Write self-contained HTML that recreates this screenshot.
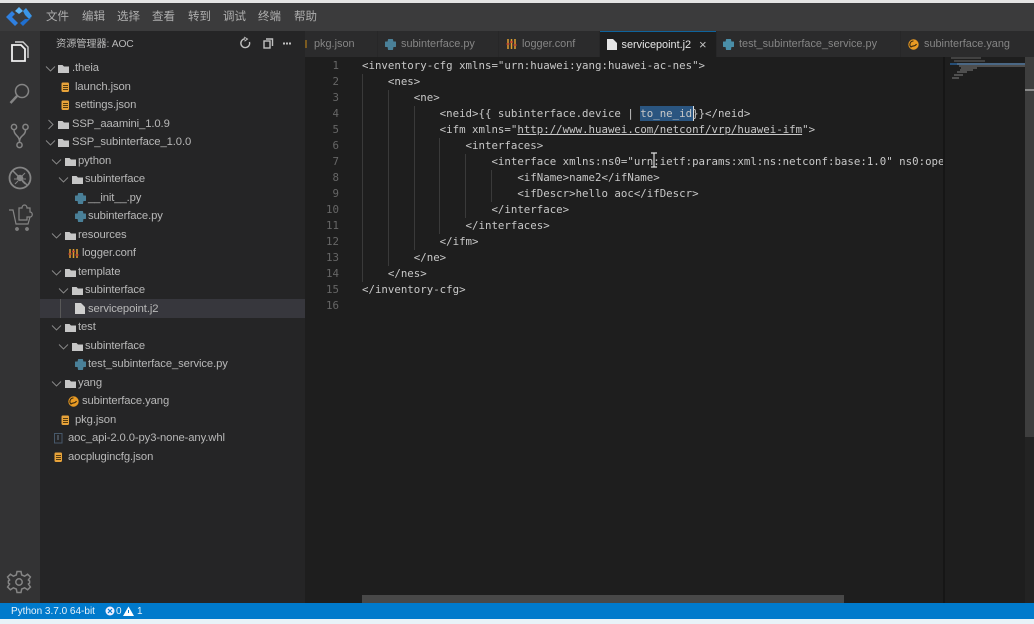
<!DOCTYPE html>
<html><head><meta charset="utf-8"><style>
*{box-sizing:border-box}
html,body{margin:0;padding:0;width:1034px;height:624px;overflow:hidden;background:#1e1e1e}
body{position:relative;font-family:"Liberation Sans","Noto Sans CJK SC",sans-serif;filter:blur(.35px)}
.a{position:absolute}
.t{position:absolute;white-space:nowrap}
#menu span{position:absolute;top:9px;font-size:11.5px;line-height:16px;color:#aeaeae}
.row{position:absolute;left:0;width:265px;height:18.5px;line-height:18.5px;font-size:11.25px;color:#b8b8b8;white-space:nowrap;letter-spacing:-.1px}
.row svg{position:absolute}
.row svg[stroke="#aaa"]{stroke:#8c8c8c;stroke-width:.9}
.row b{position:absolute;font-weight:normal;top:0}
.tab{position:absolute;top:31px;height:26px;background:#2b2b2c;font-size:10.9px;line-height:27px;color:#858585;white-space:nowrap}
.tab b{position:absolute;font-weight:normal;top:0}
.tab svg{position:absolute}
.ln{position:absolute;left:305px;width:34px;text-align:right;height:16px;font:10.75px/16px "DejaVu Sans Mono",monospace;color:#666}
.c{position:absolute;left:362px;height:16px;font:10.75px/16px "DejaVu Sans Mono",monospace;color:#c8c8c8;white-space:pre}
.g{position:absolute;width:1px;background:#3a3a3a}
</style></head><body>
<div class="a" style="left:0;top:0;width:1034px;height:3px;background:#e4e4e4"></div>
<div class="a" style="left:0;top:3px;width:1034px;height:28px;background:#3b3b3c"></div>
<svg class="a" style="left:5px;top:7px" width="28" height="20" viewBox="0 0 28 20"><path d="M1 10L7 4L10 7L7 10L10 13L13 16L10 19Z" fill="#2f80e0"/><path d="M10 4L14 0L18 4L14 7Z" fill="#5fb4f5"/><path d="M18 4L21 1L27 9L24 12L20 8Z" fill="#3a96e8"/><path d="M24 12L27 10L18 19L15 16L20 12Z" fill="#1f6fd0"/></svg>
<div id="menu"><span style="left:46px">文件</span><span style="left:82px">编辑</span><span style="left:117px">选择</span><span style="left:152px">查看</span><span style="left:188px">转到</span><span style="left:223px">调试</span><span style="left:258px">终端</span><span style="left:294px">帮助</span></div>

<div class="a" style="left:0;top:31px;width:40px;height:572px;background:#333334"></div>
<svg class="a" style="left:0;top:31px" width="40" height="210" viewBox="0 0 40 210" fill="none" stroke="#858585" stroke-width="1.5">
<g stroke="#f0f0f0" stroke-width="1.8"><path d="M12 14H21L25 18V30H12Z"/><path d="M15 11H23L28 16V27" stroke="#cfcfcf" stroke-width="1.4"/></g>
<circle cx="22" cy="60" r="6.5"/><path d="M17 65L10.5 72" stroke-width="2.4"/>
<circle cx="14" cy="96" r="2.6"/><circle cx="25.5" cy="96" r="2.6"/><circle cx="19.5" cy="114" r="2.6"/><path d="M14 99C14 105 19.5 104 19.5 111M25.5 99C25.5 105 19.5 104 19.5 111"/>
<circle cx="20" cy="147" r="10.5" stroke-width="1.8"/><path d="M12.5 139.5L27.5 154.5"/><circle cx="20" cy="147" r="3.2" fill="#858585" stroke="none"/><path d="M15 142L18 145M25 142L22 145M14 148H26M15 153L18 150M25 153L22 150" stroke-width="1"/>
<path d="M9 179H13L16 193H28L30 186" stroke-width="1.2"/><path d="M19 177H22C22 173 27 173 27 177H30V181C33 181 33 186 30 186H27V189H19Z" stroke-width="1.2"/><circle cx="17" cy="198" r="1.1"/><circle cx="27" cy="198" r="1.1"/>
</svg>
<svg class="a" style="left:6px;top:569px" width="26" height="26" viewBox="0 0 26 26" fill="none" stroke="#858585" stroke-width="1.5"><circle cx="13" cy="13" r="3.2"/><path d="M11 2.5H15L15.7 6L18.6 7.2L21.6 5.2L24.4 8L22.4 11L23.6 12V14L22.4 15L24.4 18L21.6 20.8L18.6 18.8L15.7 20L15 23.5H11L10.3 20L7.4 18.8L4.4 20.8L1.6 18L3.6 15L2.4 14V12L3.6 11L1.6 8L4.4 5.2L7.4 7.2L10.3 6Z"/></svg>

<div class="a" style="left:40px;top:31px;width:265px;height:572px;background:#252526"></div>
<div class="t" style="left:56px;top:37px;font-size:10.3px;line-height:16px;color:#b8b8b8;letter-spacing:-.2px">资源管理器: AOC</div>
<svg class="a" style="left:238px;top:36px" width="56" height="16" viewBox="0 0 56 16" fill="none" stroke="#c0c0c0" stroke-width="1.4"><path d="M7 2.8A4.4 4.4 0 1 0 11.5 6"/><path d="M6 1L9.5 3L6.5 5.2" stroke-width="1"/><rect x="26" y="5" width="6" height="7"/><path d="M28 3H34.5V10"/><path d="M45 7.5H53" stroke-dasharray="2 1" stroke-width="2"/></svg>

<div class="row" style="top:299px;left:40px;background:#37373d;height:19px"></div>
<div class="a" style="left:60px;top:299px;width:1px;height:19px;background:#585858"></div>

<div id="tree" class="a" style="left:40px;top:.6px;width:265px;height:600px">
<div class="row" style="top:58.5px"><svg style="left:5px;top:6px" width="11" height="8" fill="none" stroke="#aaa"><path d="M1 1.5L5.5 6L10 1.5"/></svg><svg style="left:18px;top:5px" width="12" height="10"><path d="M0 1H4.5L6 2.5H11V9H0Z" fill="#c6c6c6"/></svg><b style="left:32px">.theia</b></div>
<div class="row" style="top:77px"><svg style="left:21px;top:4px" width="9" height="11"><rect x=".5" y=".5" width="7.5" height="9.5" rx="1.2" fill="#e8a33a"/><path d="M2 3.5H7M2 5.5H7M2 7.5H7" stroke="#553c10"/></svg><b style="left:35px">launch.json</b></div>
<div class="row" style="top:95.5px"><svg style="left:21px;top:4px" width="9" height="11"><rect x=".5" y=".5" width="7.5" height="9.5" rx="1.2" fill="#e8a33a"/><path d="M2 3.5H7M2 5.5H7M2 7.5H7" stroke="#553c10"/></svg><b style="left:35px">settings.json</b></div>
<div class="row" style="top:114px"><svg style="left:7px;top:4px" width="8" height="11" fill="none" stroke="#aaa"><path d="M1.5 1L6 5.5L1.5 10"/></svg><svg style="left:18px;top:5px" width="12" height="10"><path d="M0 1H4.5L6 2.5H11V9H0Z" fill="#c6c6c6"/></svg><b style="left:32px">SSP_aaamini_1.0.9</b></div>
<div class="row" style="top:132.5px"><svg style="left:5px;top:6px" width="11" height="8" fill="none" stroke="#aaa"><path d="M1 1.5L5.5 6L10 1.5"/></svg><svg style="left:18px;top:5px" width="12" height="10"><path d="M0 1H4.5L6 2.5H11V9H0Z" fill="#c6c6c6"/></svg><b style="left:32px">SSP_subinterface_1.0.0</b></div>
<div class="row" style="top:151px"><svg style="left:11px;top:6px" width="11" height="8" fill="none" stroke="#aaa"><path d="M1 1.5L5.5 6L10 1.5"/></svg><svg style="left:25px;top:5px" width="12" height="10"><path d="M0 1H4.5L6 2.5H11V9H0Z" fill="#c6c6c6"/></svg><b style="left:38px">python</b></div>
<div class="row" style="top:169.5px"><svg style="left:18px;top:6px" width="11" height="8" fill="none" stroke="#aaa"><path d="M1 1.5L5.5 6L10 1.5"/></svg><svg style="left:32px;top:5px" width="12" height="10"><path d="M0 1H4.5L6 2.5H11V9H0Z" fill="#c6c6c6"/></svg><b style="left:45px">subinterface</b></div>
<div class="row" style="top:188px"><svg style="left:35px;top:4px" width="11" height="11"><path d="M3.5 .5H7.5L8 3H10.5V7.5H8L7.5 10.5H3.5L3 7.5H.5V3H3Z" fill="#4a8098" stroke="#4a8098" stroke-linejoin="round"/></svg><b style="left:48px">__init__.py</b></div>
<div class="row" style="top:206.5px"><svg style="left:35px;top:4px" width="11" height="11"><path d="M3.5 .5H7.5L8 3H10.5V7.5H8L7.5 10.5H3.5L3 7.5H.5V3H3Z" fill="#4a8098" stroke="#4a8098" stroke-linejoin="round"/></svg><b style="left:48px">subinterface.py</b></div>
<div class="row" style="top:225px"><svg style="left:11px;top:6px" width="11" height="8" fill="none" stroke="#aaa"><path d="M1 1.5L5.5 6L10 1.5"/></svg><svg style="left:25px;top:5px" width="12" height="10"><path d="M0 1H4.5L6 2.5H11V9H0Z" fill="#c6c6c6"/></svg><b style="left:38px">resources</b></div>
<div class="row" style="top:243.5px"><svg style="left:28px;top:4px" width="11" height="11" stroke="#e0a030" stroke-width="1.5"><path d="M2 1V10M5.5 1V10M9 1V10"/><path d="M.5 6H3.5M4 3.5H7M7.5 7H10.5" stroke="#c04030"/></svg><b style="left:42px">logger.conf</b></div>
<div class="row" style="top:262px"><svg style="left:11px;top:6px" width="11" height="8" fill="none" stroke="#aaa"><path d="M1 1.5L5.5 6L10 1.5"/></svg><svg style="left:25px;top:5px" width="12" height="10"><path d="M0 1H4.5L6 2.5H11V9H0Z" fill="#c6c6c6"/></svg><b style="left:38px">template</b></div>
<div class="row" style="top:280.5px"><svg style="left:18px;top:6px" width="11" height="8" fill="none" stroke="#aaa"><path d="M1 1.5L5.5 6L10 1.5"/></svg><svg style="left:32px;top:5px" width="12" height="10"><path d="M0 1H4.5L6 2.5H11V9H0Z" fill="#c6c6c6"/></svg><b style="left:45px">subinterface</b></div>
<div class="row" style="top:299px"><svg style="left:35px;top:3.5px" width="10" height="12"><path d="M0 0H6L10 4V11H0Z" fill="#cfcfcf"/></svg><b style="left:48px">servicepoint.j2</b></div>
<div class="row" style="top:317.5px"><svg style="left:11px;top:6px" width="11" height="8" fill="none" stroke="#aaa"><path d="M1 1.5L5.5 6L10 1.5"/></svg><svg style="left:25px;top:5px" width="12" height="10"><path d="M0 1H4.5L6 2.5H11V9H0Z" fill="#c6c6c6"/></svg><b style="left:38px">test</b></div>
<div class="row" style="top:336px"><svg style="left:18px;top:6px" width="11" height="8" fill="none" stroke="#aaa"><path d="M1 1.5L5.5 6L10 1.5"/></svg><svg style="left:32px;top:5px" width="12" height="10"><path d="M0 1H4.5L6 2.5H11V9H0Z" fill="#c6c6c6"/></svg><b style="left:45px">subinterface</b></div>
<div class="row" style="top:354.5px"><svg style="left:35px;top:4px" width="11" height="11"><path d="M3.5 .5H7.5L8 3H10.5V7.5H8L7.5 10.5H3.5L3 7.5H.5V3H3Z" fill="#4a8098" stroke="#4a8098" stroke-linejoin="round"/></svg><b style="left:48px">test_subinterface_service.py</b></div>
<div class="row" style="top:373px"><svg style="left:11px;top:6px" width="11" height="8" fill="none" stroke="#aaa"><path d="M1 1.5L5.5 6L10 1.5"/></svg><svg style="left:25px;top:5px" width="12" height="10"><path d="M0 1H4.5L6 2.5H11V9H0Z" fill="#c6c6c6"/></svg><b style="left:38px">yang</b></div>
<div class="row" style="top:391.5px"><svg style="left:28px;top:4px" width="11" height="11"><circle cx="5.5" cy="5.5" r="5.2" fill="#e89a24"/><path d="M5.5 2A3.5 3.5 0 0 0 3 8C5 6 7 8 8.5 5" fill="none" stroke="#3a2a10" stroke-width="1.1"/></svg><b style="left:42px">subinterface.yang</b></div>
<div class="row" style="top:410px"><svg style="left:21px;top:4px" width="9" height="11"><rect x=".5" y=".5" width="7.5" height="9.5" rx="1.2" fill="#e8a33a"/><path d="M2 3.5H7M2 5.5H7M2 7.5H7" stroke="#553c10"/></svg><b style="left:35px">pkg.json</b></div>
<div class="row" style="top:428.5px"><svg style="left:14px;top:4px" width="9" height="11" fill="none" stroke="#46586a"><path d="M.5 .5H8V10H.5Z"/><path d="M4 2V7" stroke="#6c7c8c"/></svg><b style="left:28px">aoc_api-2.0.0-py3-none-any.whl</b></div>
<div class="row" style="top:447px"><svg style="left:14px;top:4px" width="9" height="11"><rect x=".5" y=".5" width="7.5" height="9.5" rx="1.2" fill="#e8a33a"/><path d="M2 3.5H7M2 5.5H7M2 7.5H7" stroke="#553c10"/></svg><b style="left:28px">aocplugincfg.json</b></div>
</div>

<!-- tabs -->
<div class="a" style="left:305px;top:31px;width:729px;height:26px;background:#272728"></div>
<div class="tab" style="left:305px;width:72px"><div class="a" style="left:0;top:9px;width:2px;height:8px;background:#7a5a20"></div><b style="left:9px">pkg.json</b></div>
<div class="tab" style="left:378px;width:120px"><svg style="left:7px;top:8px" width="11" height="11"><path d="M3.5 .5H7.5L8 3H10.5V7.5H8L7.5 10.5H3.5L3 7.5H.5V3H3Z" fill="#4a8098" stroke="#4a8098" stroke-linejoin="round"/></svg><b style="left:23px">subinterface.py</b></div>
<div class="tab" style="left:499px;width:100px"><svg style="left:7px;top:8px" width="11" height="10" stroke="#e0a030" stroke-width="1.5"><path d="M2 0V10M5.5 0V10M9 0V10"/><path d="M.5 5H3.5M4 3H7M7.5 6H10.5" stroke="#c04030"/></svg><b style="left:23px">logger.conf</b></div>
<div class="tab" style="left:600px;width:116px;background:#1e1e1e;color:#e6e6e6;border-top:1px solid #0e639c;line-height:26px"><svg style="left:7px;top:7px" width="10" height="12"><path d="M0 0H6L10 4V11H0Z" fill="#e6e6e6"/></svg><b style="left:21.5px;top:0">servicepoint.j2</b><b style="left:99px;top:0;font-size:13px;color:#c0c0c0">×</b></div>
<div class="tab" style="left:717px;width:183px"><svg style="left:6px;top:8px" width="11" height="11"><path d="M3.5 .5H7.5L8 3H10.5V7.5H8L7.5 10.5H3.5L3 7.5H.5V3H3Z" fill="#4a8ea8" stroke="#4a8ea8" stroke-linejoin="round"/></svg><b style="left:22px">test_subinterface_service.py</b></div>
<div class="tab" style="left:901px;width:133px"><svg style="left:7px;top:8px" width="11" height="11"><circle cx="5.5" cy="5.5" r="5.2" fill="#e89a24"/><path d="M5.5 2A3.5 3.5 0 0 0 3 8C5 6 7 8 8.5 5" fill="none" stroke="#3a2a10" stroke-width="1.1"/></svg><b style="left:23px">subinterface.yang</b></div>

<!-- editor -->
<div class="a" style="left:305px;top:57px;width:729px;height:546px;background:#1e1e1e"></div>
<div class="a" style="left:640px;top:106px;width:53px;height:15px;background:#2a5580"></div>
<div class="a" style="left:693px;top:106px;width:1px;height:15px;background:#ddd"></div>
<div class="g" style="left:362px;top:74px;height:208px"></div>
<div class="g" style="left:388px;top:90px;height:176px"></div>
<div class="g" style="left:414px;top:106px;height:144px"></div>
<div class="g" style="left:439px;top:138px;height:96px"></div>
<div class="g" style="left:465px;top:154px;height:64px"></div>
<div class="g" style="left:491px;top:170px;height:32px"></div>

<div class="ln" style="top:58px">1</div><div class="ln" style="top:74px">2</div><div class="ln" style="top:90px">3</div><div class="ln" style="top:106px">4</div><div class="ln" style="top:122px">5</div><div class="ln" style="top:138px">6</div><div class="ln" style="top:154px">7</div><div class="ln" style="top:170px">8</div><div class="ln" style="top:186px">9</div><div class="ln" style="top:202px">10</div><div class="ln" style="top:218px">11</div><div class="ln" style="top:234px">12</div><div class="ln" style="top:250px">13</div><div class="ln" style="top:266px">14</div><div class="ln" style="top:282px">15</div><div class="ln" style="top:298px">16</div>

<div class="c" style="top:58px">&lt;inventory-cfg xmlns="urn:huawei:yang:huawei-ac-nes"&gt;</div>
<div class="c" style="top:74px">    &lt;nes&gt;</div>
<div class="c" style="top:90px">        &lt;ne&gt;</div>
<div class="c" style="top:106px">            &lt;neid&gt;{{ subinterface.device | to_ne_id}}&lt;/neid&gt;</div>
<div class="c" style="top:122px">            &lt;ifm xmlns="<span style="text-decoration:underline">http://www.huawei.com/netconf/vrp/huawei-ifm</span>"&gt;</div>
<div class="c" style="top:138px">                &lt;interfaces&gt;</div>
<div class="c" style="top:154px;width:581px;overflow:hidden">                    &lt;interface xmlns:ns0="urn:ietf:params:xml:ns:netconf:base:1.0" ns0:operation="merge"&gt;</div>
<div class="c" style="top:170px">                        &lt;ifName&gt;name2&lt;/ifName&gt;</div>
<div class="c" style="top:186px">                        &lt;ifDescr&gt;hello aoc&lt;/ifDescr&gt;</div>
<div class="c" style="top:202px">                    &lt;/interface&gt;</div>
<div class="c" style="top:218px">                &lt;/interfaces&gt;</div>
<div class="c" style="top:234px">            &lt;/ifm&gt;</div>
<div class="c" style="top:250px">        &lt;/ne&gt;</div>
<div class="c" style="top:266px">    &lt;/nes&gt;</div>
<div class="c" style="top:282px">&lt;/inventory-cfg&gt;</div>

<svg class="a" style="left:650px;top:152px" width="8" height="16" fill="none" stroke="#ddd" stroke-width="1.2"><path d="M1 1H7M1 15H7M4 1V15"/></svg>

<!-- minimap -->
<div class="a" style="left:943px;top:57px;width:2px;height:546px;background:#161616"></div>
<div class="a" style="left:950px;top:63px;width:75px;height:2px;background:#264f78"></div>
<svg class="a" style="left:945px;top:55px" width="80" height="30" fill="none" stroke="#7f7f7f"><path d="M6 3H36" stroke-width=".8"/><path d="M9 6H40" stroke-width=".7"/><path d="M12 9H80" stroke="#6f7f8f"/><path d="M14 11H80"/><path d="M16 13H32M15 15H28M12 17H22M9 20H18M7 23H14" stroke-width=".9"/></svg>
<div class="a" style="left:1025px;top:57px;width:9px;height:380px;background:#3e3e3e"></div>
<div class="a" style="left:1025px;top:437px;width:9px;height:166px;background:#232323"></div>
<div class="a" style="left:1025px;top:89px;width:9px;height:2px;background:#8a8a8a"></div>
<div class="a" style="left:362px;top:595px;width:482px;height:8px;background:#484848"></div>

<!-- status -->
<div class="a" style="left:0;top:603px;width:1034px;height:16px;background:#007acc"></div>
<div class="a" style="left:0;top:619px;width:1034px;height:5px;background:#e8f2f8"></div>
<div class="t" style="left:11px;top:604px;font-size:10px;line-height:16px;color:#e8f2fa">Python 3.7.0 64-bit</div>
<svg class="a" style="left:105px;top:606px" width="30" height="11"><circle cx="5" cy="5" r="4.5" fill="#eef"/><path d="M3 3L7 7M7 3L3 7" stroke="#007acc" stroke-width="1.2"/><path d="M23.5 .5L29 10H18Z" fill="#fff"/><path d="M23.5 4V7" stroke="#007acc"/></svg>
<div class="t" style="left:116px;top:604px;font-size:10px;line-height:16px;color:#e8f2fa">0</div>
<div class="t" style="left:137px;top:604px;font-size:10px;line-height:16px;color:#e8f2fa">1</div>
</body></html>
